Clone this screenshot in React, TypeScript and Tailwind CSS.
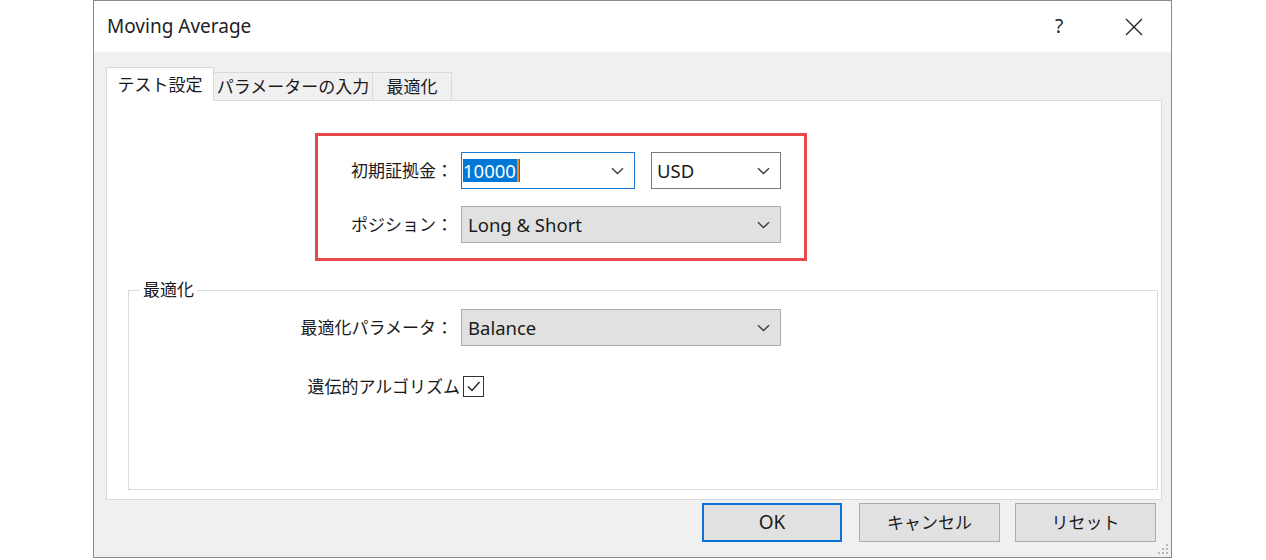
import React from 'react';

const font = "font-['Noto_Sans','Noto_Sans_CJK_JP',sans-serif]";

function Chevron() {
  return (
    <svg width="13" height="8" viewBox="0 0 13 8" className="shrink-0">
      <path d="M1 1.2 L6.5 6.5 L12 1.2" fill="none" stroke="#3c3c3c" strokeWidth="1.4" />
    </svg>
  );
}

function Combo({
  width,
  value,
  variant = 'gray',
}: {
  width: string;
  value: React.ReactNode;
  variant?: 'gray' | 'white' | 'focus';
}) {
  const look =
    variant === 'focus'
      ? 'bg-white border-[#1a7ad4]'
      : variant === 'white'
        ? 'bg-white border-[#7a7a7a]'
        : 'bg-[#e1e1e1] border-[#adadad]';
  return (
    <div className={`${width} h-[37px] border flex items-center justify-between pr-[10px] ${look}`}>
      <div className="flex items-center text-[18.5px] text-[#1a1a1a]">{value}</div>
      <Chevron />
    </div>
  );
}

function Button({ label, primary, latin }: { label: string; primary?: boolean; latin?: boolean }) {
  return (
    <div
      className={`h-[39px] flex items-center justify-center bg-[#e1e1e1] text-[#1a1a1a] ${
        latin ? 'text-[19px]' : 'text-[17px]'
      } ${primary ? 'w-[140px] border-2 border-[#0a74d6]' : 'w-[141px] border border-[#adadad]'}`}
    >
      {label}
    </div>
  );
}

export default function App() {
  return (
    <div className={`w-[1266px] h-[560px] bg-white flex ${font}`}>
      <div className="relative ml-[93px] w-[1079px] h-[558px] border border-[#8a8a8a] flex flex-col">
        {/* title bar */}
        <div className="h-[51px] bg-white flex items-center pl-[13px] pr-[14px]">
          <span className="flex-1 text-[19px] text-[#222]">Moving Average</span>
          <span className="w-[46px] text-center text-[19px] text-[#222]">?</span>
          <span className="ml-[29px] w-[46px] flex justify-center">
            <svg width="18" height="18" viewBox="0 0 18 18">
              <path d="M1 1 L17 17 M17 1 L1 17" stroke="#222" strokeWidth="1.3" />
            </svg>
          </span>
        </div>

        {/* body */}
        <div className="flex-1 bg-[#f0f0f0] flex flex-col pt-[15px] pl-[12px] pr-[9px]">
          <div className="relative z-10 -mb-px flex items-end">
            <div className="w-[108px] h-[34px] bg-white border border-b-0 border-[#d9d9d9] flex items-center justify-center text-[17px] text-[#1a1a1a]">
              テスト設定
            </div>
            <div className="w-[159px] h-[28px] mb-px border border-l-0 border-b-0 border-[#d9d9d9] flex items-center justify-center text-[17px] text-[#1a1a1a]">
              パラメーターの入力
            </div>
            <div className="w-[79px] h-[28px] mb-px border border-l-0 border-b-0 border-[#d9d9d9] flex items-center justify-center text-[17px] text-[#1a1a1a]">
              最適化
            </div>
          </div>

          <div className="h-[400px] bg-white border border-[#d9d9d9] flex flex-col">
            <div className="mt-[32px] ml-[208px] w-[492px] h-[128px] border-[3px] border-[#e8484a] pt-[16px] pr-[23px] flex flex-col gap-[17px]">
              <div className="flex items-center">
                <div className="w-[135px] text-right text-[17px] text-[#1a1a1a]">初期証拠金：</div>
                <div className="ml-[8px]">
                  <Combo
                    width="w-[174px]"
                    variant="focus"
                    value={
                      <span className="ml-[1px] flex items-center h-[23px] bg-[#0078d7] text-white pr-[1px]">
                        10000
                        <span className="ml-[1px] w-[2px] h-[23px] bg-[#e8892a]" />
                      </span>
                    }
                  />
                </div>
                <div className="ml-[16px]">
                  <Combo width="w-[130px]" variant="white" value={<span className="pl-[5px]">USD</span>} />
                </div>
              </div>
              <div className="flex items-center">
                <div className="w-[135px] text-right text-[17px] text-[#1a1a1a]">ポジション：</div>
                <div className="ml-[8px]">
                  <Combo width="w-[320px]" value={<span className="pl-[6px]">Long &amp; Short</span>} />
                </div>
              </div>
            </div>

            <fieldset className="mt-[17px] ml-[21px] mr-[3px] mb-[9px] flex-1 border border-[#dcdcdc]">
              <legend className="ml-[11px] px-[3px] leading-[24px] text-[17px] text-[#1a1a1a]">最適化</legend>
              <div className="mt-[7px] flex items-center">
                <div className="w-[324px] text-right text-[17px] text-[#1a1a1a]">最適化パラメータ：</div>
                <div className="ml-[8px]">
                  <Combo width="w-[320px]" value={<span className="pl-[6px]">Balance</span>} />
                </div>
              </div>
              <div className="mt-[28px] flex items-center">
                <div className="w-[331px] text-right whitespace-nowrap text-[17px] text-[#1a1a1a]">遺伝的アルゴリズム</div>
                <div className="ml-[3px] w-[21px] h-[21px] border border-[#333] bg-white flex items-center justify-center">
                  <svg width="15" height="15" viewBox="0 0 15 15">
                    <path d="M2 7.5 L6 11.5 L13.5 3" fill="none" stroke="#222" strokeWidth="1.4" />
                  </svg>
                </div>
              </div>
            </fieldset>
          </div>

          <div className="mt-[3px] mr-[6px] flex justify-end">
            <Button label="OK" primary latin />
            <div className="ml-[17px]">
              <Button label="キャンセル" />
            </div>
            <div className="ml-[15px]">
              <Button label="リセット" />
            </div>
          </div>
        </div>

        {/* resize grip */}
        <svg className="absolute right-[2px] bottom-[2px]" width="11" height="11" viewBox="0 0 11 11">
          <rect x="8" y="0" width="2" height="2" fill="#b8b8b8" />
          <rect x="4" y="4" width="2" height="2" fill="#b8b8b8" />
          <rect x="8" y="4" width="2" height="2" fill="#b8b8b8" />
          <rect x="0" y="8" width="2" height="2" fill="#b8b8b8" />
          <rect x="4" y="8" width="2" height="2" fill="#b8b8b8" />
          <rect x="8" y="8" width="2" height="2" fill="#b8b8b8" />
        </svg>
      </div>
    </div>
  );
}
